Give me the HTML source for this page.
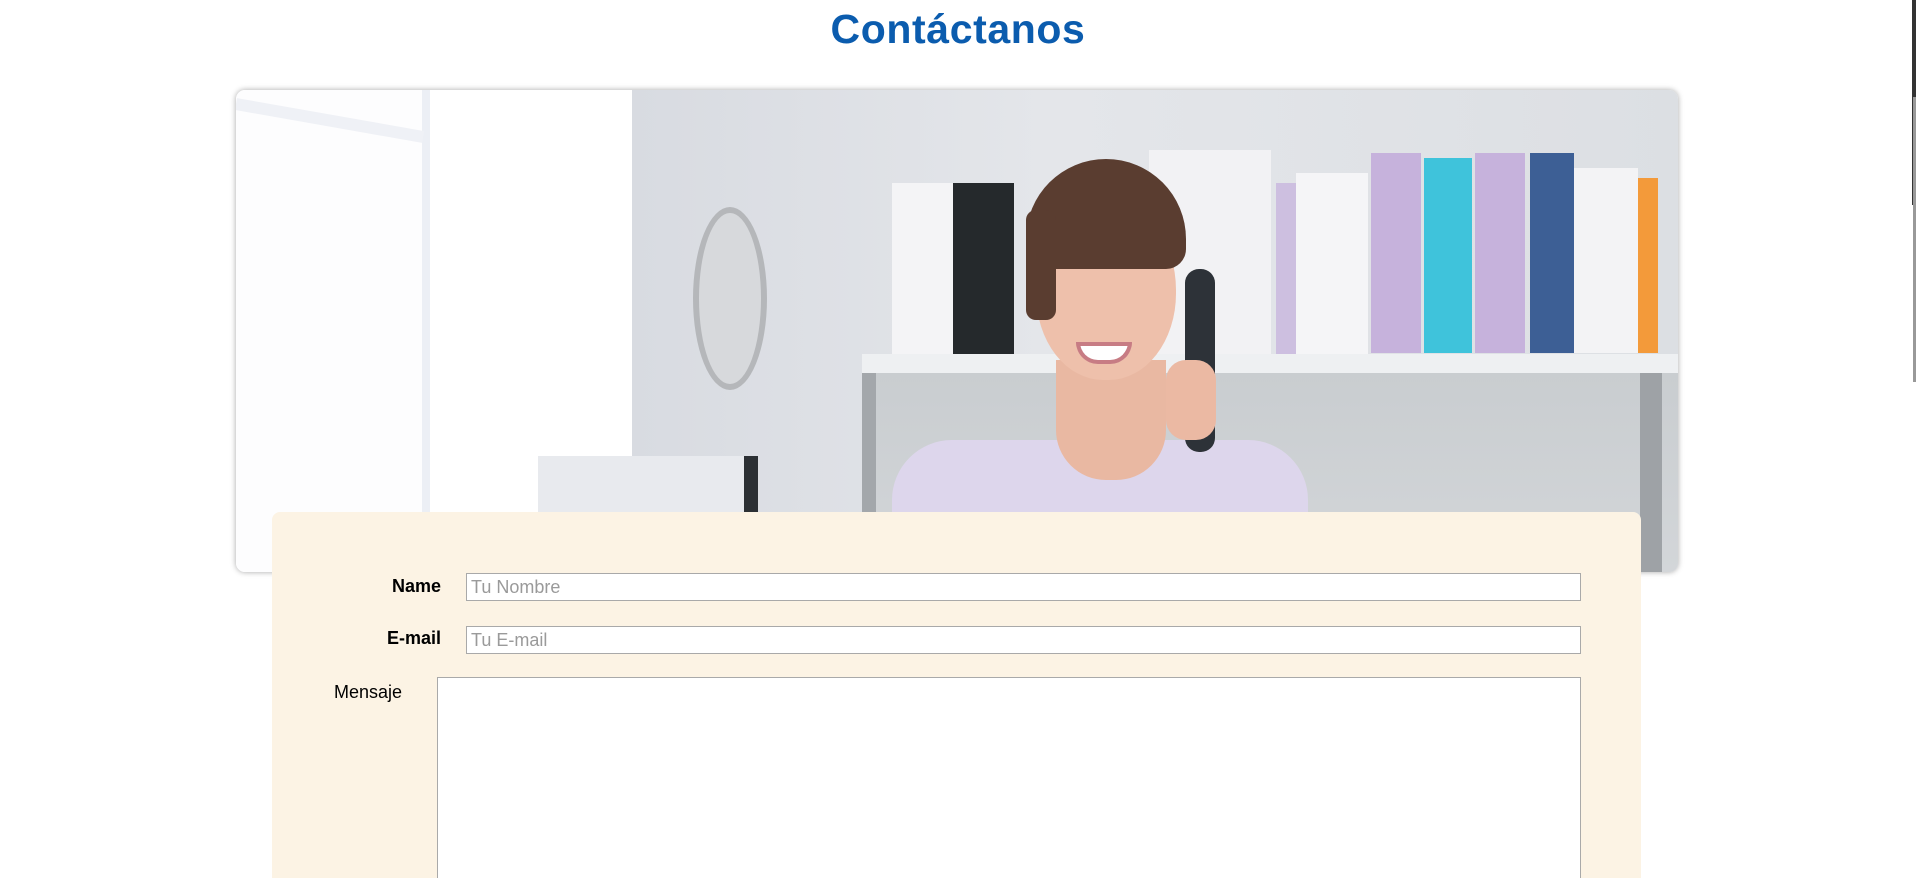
<!DOCTYPE html>
<html><head><meta charset="utf-8"><style>
*{box-sizing:border-box;margin:0;padding:0}
html,body{width:1916px;height:878px;overflow:hidden}
body{background:#fff;font-family:"Liberation Sans",sans-serif}
#w{position:relative;width:1916px;height:878px;overflow:hidden}
h1{position:absolute;top:6px;left:0;width:1916px;text-align:center;font-size:41px;font-weight:bold;color:#0b5cae;letter-spacing:0.6px}
.card{position:absolute;left:236px;top:90px;width:1442px;height:482px;border-radius:9px;overflow:hidden;box-shadow:0 0 6px rgba(0,0,0,.35);background:#fff}
.a{position:absolute}
.form{position:absolute;left:272px;top:512px;width:1369px;height:380px;background:#fcf3e4;border-radius:8px}
.lbl{position:absolute;font-size:18px;font-weight:bold;color:#000;text-align:right}
.inp{position:absolute;background:#fff;border:1px solid #a9a9a9;font-size:18px;color:#9a9a9a;padding:3px 4px;line-height:20px}
</style></head><body><div id="w">
<h1>Contáctanos</h1>
<div class="card">
 <div class="a" style="left:396px;top:0;width:1046px;height:482px;background:linear-gradient(90deg,#d8dbe1,#e4e6ea 40%,#dcdfe3)"></div>
 <div class="a" style="left:0;top:0;width:186px;height:482px;background:#fdfdfe"></div>
 <div class="a" style="left:186px;top:0;width:8px;height:482px;background:#eceff5"></div>
 <div class="a" style="left:0;top:8px;width:190px;height:12px;background:#eff1f6;transform:rotate(10deg);transform-origin:left"></div>
 <div class="a" style="left:457px;top:117px;width:74px;height:183px;border-radius:50%;border:6px solid #b5b7ba;background:#d7d9dc"></div>
 <div class="a" style="left:626px;top:283px;width:816px;height:199px;background:linear-gradient(180deg,#c9cdd0,#d3d6d9)"></div>
 <div class="a" style="left:626px;top:283px;width:14px;height:199px;background:#a3a7ab"></div>
 <div class="a" style="left:1404px;top:283px;width:22px;height:199px;background:#9ea2a6"></div>
 <div class="a" style="left:656px;top:93px;width:61px;height:172px;background:#f4f4f6"></div>
 <div class="a" style="left:717px;top:93px;width:61px;height:172px;background:#25292c"></div>
 <div class="a" style="left:913px;top:60px;width:122px;height:205px;background:#f2f2f4"></div>
 <div class="a" style="left:1040px;top:93px;width:20px;height:172px;background:#cdbfe0"></div>
 <div class="a" style="left:1060px;top:83px;width:72px;height:182px;background:#f5f5f7"></div>
 <div class="a" style="left:1135px;top:63px;width:50px;height:200px;background:#c6b2dc"></div>
 <div class="a" style="left:1188px;top:68px;width:48px;height:195px;background:#3fc3db"></div>
 <div class="a" style="left:1239px;top:63px;width:50px;height:200px;background:#c6b2dc"></div>
 <div class="a" style="left:1294px;top:63px;width:44px;height:200px;background:#3d5f95"></div>
 <div class="a" style="left:1338px;top:78px;width:64px;height:185px;background:#f3f3f5"></div>
 <div class="a" style="left:1402px;top:88px;width:20px;height:175px;background:#f39a3a"></div>
 <div class="a" style="left:626px;top:264px;width:816px;height:19px;background:#eef0f2"></div>
 <div class="a" style="left:302px;top:366px;width:220px;height:120px;background:#e8eaee;border-right:14px solid #2c3034"></div>
 <div class="a" style="left:656px;top:350px;width:416px;height:140px;background:#ddd6ec;border-radius:60px 60px 0 0"></div>
 <div class="a" style="left:820px;top:270px;width:110px;height:120px;background:#e9b8a2;border-radius:0 0 50px 50px"></div>
 <div class="a" style="left:800px;top:110px;width:140px;height:180px;background:#eec0ab;border-radius:50% 50% 48% 48%"></div>
 <div class="a" style="left:790px;top:69px;width:160px;height:110px;background:#5a3d30;border-radius:80px 80px 20px 20px"></div>
 <div class="a" style="left:790px;top:120px;width:30px;height:110px;background:#5a3d30;border-radius:10px"></div>
 <div class="a" style="left:840px;top:252px;width:56px;height:22px;background:#fff;border-radius:0 0 28px 28px;border:4px solid #c77c84"></div>
 <div class="a" style="left:949px;top:179px;width:30px;height:183px;background:#2d3238;border-radius:14px"></div>
 <div class="a" style="left:930px;top:270px;width:50px;height:80px;background:#ebb9a3;border-radius:20px"></div>
</div>
<div class="form">
 <div class="lbl" style="left:0;width:169px;top:64px">Name</div>
 <div class="inp" style="left:194px;top:61px;width:1115px;height:28px">Tu Nombre</div>
 <div class="lbl" style="left:0;width:169px;top:116px">E-mail</div>
 <div class="inp" style="left:194px;top:114px;width:1115px;height:28px">Tu E-mail</div>
 <div class="lbl" style="left:62px;top:170px;font-weight:normal;text-align:left">Mensaje</div>
 <div class="inp" style="left:165px;top:165px;width:1144px;height:230px"></div>
</div>
<div class="a" style="left:1912px;top:0;width:4px;height:205px;background:#333"></div>
<div class="a" style="left:1913px;top:97px;width:3px;height:285px;background:#999"></div>
</div></body></html>
